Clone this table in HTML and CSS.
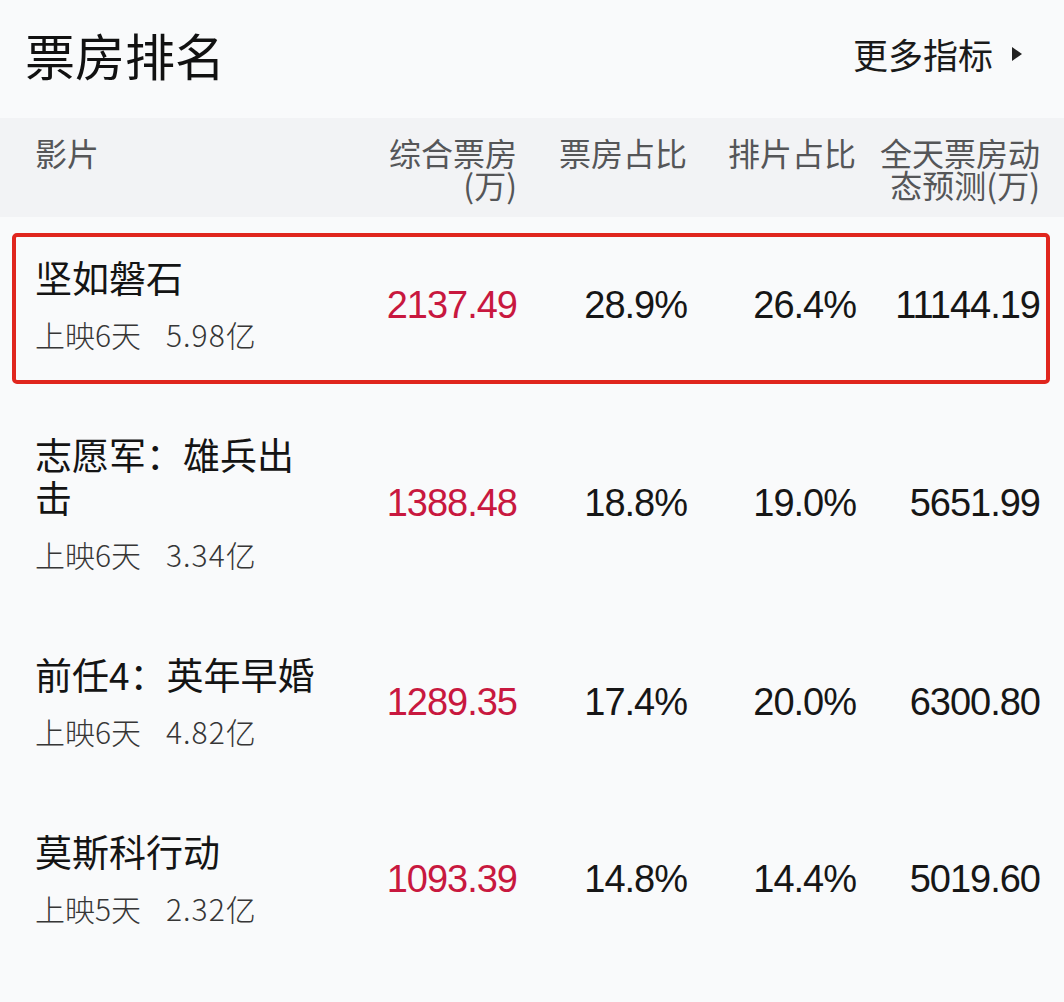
FILE: index.html
```html
<!DOCTYPE html>
<html lang="zh-CN">
<head>
<meta charset="utf-8">
<title>票房排名</title>
<link rel="stylesheet" href="styles.css">
</head>
<body>
<div class="page">
  <div class="top">
    <h1 class="title">票房排名</h1>
    <div class="more">更多指标<span class="tri"></span></div>
  </div>

  <div class="grid thead">
    <div class="film">影片</div>
    <div class="num">综合票房<br>(万)</div>
    <div class="num">票房占比</div>
    <div class="num">排片占比</div>
    <div class="num">全天票房动<br>态预测(万)</div>
  </div>

  <div class="grid row highlight">
    <div class="film">
      <div class="name">坚如磐石</div>
      <div class="sub">上映6天<span class="total">5.98亿</span></div>
    </div>
    <div class="num val red">2137.49</div>
    <div class="num val">28.9%</div>
    <div class="num val">26.4%</div>
    <div class="num val">11144.19</div>
    <div class="mark"></div>
  </div>

  <div class="grid row">
    <div class="film">
      <div class="name">志愿军：雄兵出<br>击</div>
      <div class="sub">上映6天<span class="total">3.34亿</span></div>
    </div>
    <div class="num val red">1388.48</div>
    <div class="num val">18.8%</div>
    <div class="num val">19.0%</div>
    <div class="num val">5651.99</div>
  </div>

  <div class="grid row">
    <div class="film">
      <div class="name">前任4：英年早婚</div>
      <div class="sub">上映6天<span class="total">4.82亿</span></div>
    </div>
    <div class="num val red">1289.35</div>
    <div class="num val">17.4%</div>
    <div class="num val">20.0%</div>
    <div class="num val">6300.80</div>
  </div>

  <div class="grid row">
    <div class="film">
      <div class="name">莫斯科行动</div>
      <div class="sub">上映5天<span class="total">2.32亿</span></div>
    </div>
    <div class="num val red">1093.39</div>
    <div class="num val">14.8%</div>
    <div class="num val">14.4%</div>
    <div class="num val">5019.60</div>
  </div>
</div>
</body>
</html>
```

FILE: styles.css
```css
* { box-sizing: border-box; }
html, body {
  margin: 0;
  padding: 0;
  background: #f9fafb;
}
body {
  font-family: "Noto Sans CJK SC", "Noto Sans", sans-serif;
  color: #161616;
}
.page {
  width: 1064px;
  height: 1002px;
  overflow: hidden;
  background: #f9fafb;
}
.top {
  height: 118px;
  display: flex;
  align-items: center;
  justify-content: space-between;
  padding: 0 42px 10px 25px;
}
.title {
  margin: 0;
  font-size: 50px;
  font-weight: 400;
  line-height: 60px;
  color: #111111;
}
.more {
  display: flex;
  align-items: center;
  font-size: 35px;
  line-height: 40px;
  color: #1a1a1a;
}
.tri {
  width: 0;
  height: 0;
  margin-left: 19px;
  border-top: 7px solid transparent;
  border-bottom: 7px solid transparent;
  border-left: 10px solid #222222;
}
.grid {
  display: grid;
  grid-template-columns: 345px 172px 170px 169px 184px;
  padding-right: 24px;
}
.thead {
  height: 99px;
  padding-top: 18px;
  background: #f2f3f5;
  font-size: 32px;
  line-height: 32px;
  color: #555658;
  align-items: start;
}
.film {
  padding-left: 35px;
}
.num {
  text-align: right;
}
.row {
  position: relative;
  padding: 39px 0 40px;
  align-items: center;
}
.row .film {
  align-self: start;
}
.name {
  font-size: 37px;
  line-height: 43px;
  color: #141414;
}
.sub {
  margin-top: 15px;
  font-size: 30px;
  line-height: 40px;
  color: #363636;
  font-weight: 300;
}
.total {
  margin-left: 25px;
  letter-spacing: 1px;
}
.val {
  font-family: "Liberation Sans", Arial, sans-serif;
  font-size: 38px;
  letter-spacing: -1px;
  color: #161616;
}
.red {
  color: #c8183f;
}
.mark {
  position: absolute;
  top: 16px;
  bottom: 10px;
  left: 12px;
  right: 14px;
  border: 4px solid #e0261e;
  border-radius: 5px;
  pointer-events: none;
}
```
